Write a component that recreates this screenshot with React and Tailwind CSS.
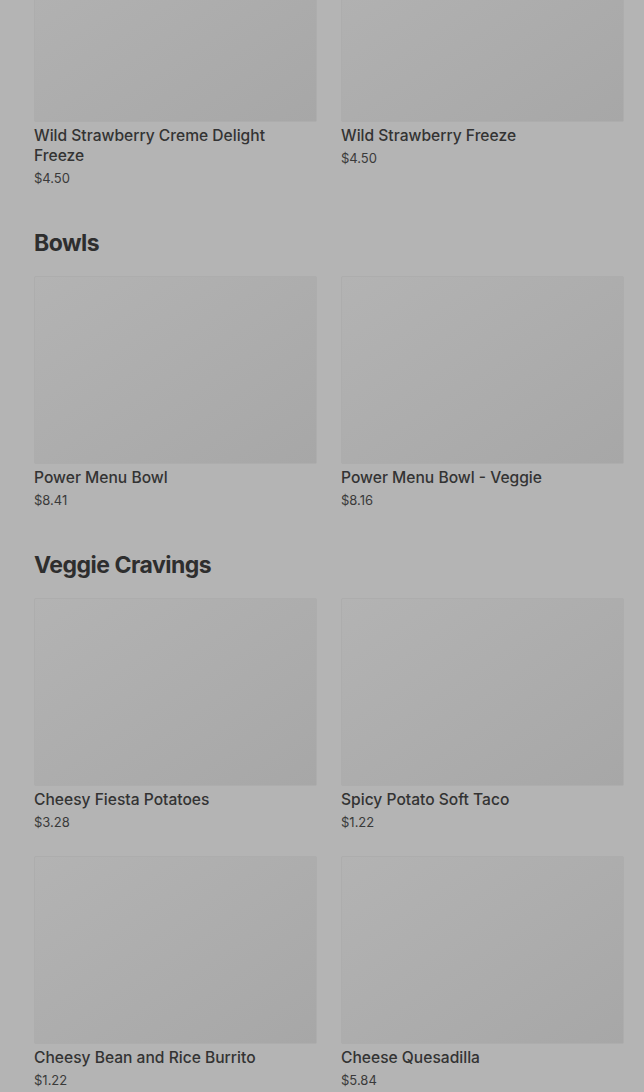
import React from 'react';

const sections = [
    {
        title: null,
        items: [
            { name: 'Wild Strawberry Creme Delight Freeze', price: '$4.50' },
            { name: 'Wild Strawberry Freeze', price: '$4.50' },
        ],
    },
    {
        title: 'Bowls',
        items: [
            { name: 'Power Menu Bowl', price: '$8.41' },
            { name: 'Power Menu Bowl - Veggie', price: '$8.16' },
        ],
    },
    {
        title: 'Veggie Cravings',
        items: [
            { name: 'Cheesy Fiesta Potatoes', price: '$3.28' },
            { name: 'Spicy Potato Soft Taco', price: '$1.22' },
            { name: 'Cheesy Bean and Rice Burrito', price: '$1.22' },
            { name: 'Cheese Quesadilla', price: '$5.84' },
        ],
    },
];

function MenuCard({ item }) {
    return (
        <div className="flex flex-col">
            <div className="h-[188px] w-full rounded-[2px] border border-[#adadad] bg-gradient-to-br from-[#b3b3b3] to-[#a7a7a7]" />
            <div className="mt-[4px] text-[15.6px] leading-[20px] font-medium text-[#333333]">{item.name}</div>
            <div className="mt-[2px] text-[13px] leading-[20px] text-[#3a3a3a]">{item.price}</div>
        </div>
    );
}

export default function App() {
    return (
        <div className="min-h-screen h-[1092px] overflow-hidden bg-[#b4b4b4]" style={{ fontFamily: 'Inter, "Noto Sans", sans-serif' }}>
            <div className="-mt-[66px] pl-[34px] pr-[20px]">
                {sections.map((section, i) => (
                    <div key={i} className={i > 0 ? 'mt-[39px]' : ''}>
                        {section.title && (
                            <h2 className="mb-[17px] text-[23px] leading-[32px] font-bold text-[#2e2e2e] tracking-[-0.5px]">{section.title}</h2>
                        )}
                        <div className="grid grid-cols-2 gap-x-[24px] gap-y-[24px]">
                            {section.items.map(item => (
                                <MenuCard key={item.name} item={item} />
                            ))}
                        </div>
                    </div>
                ))}
            </div>
        </div>
    );
}
